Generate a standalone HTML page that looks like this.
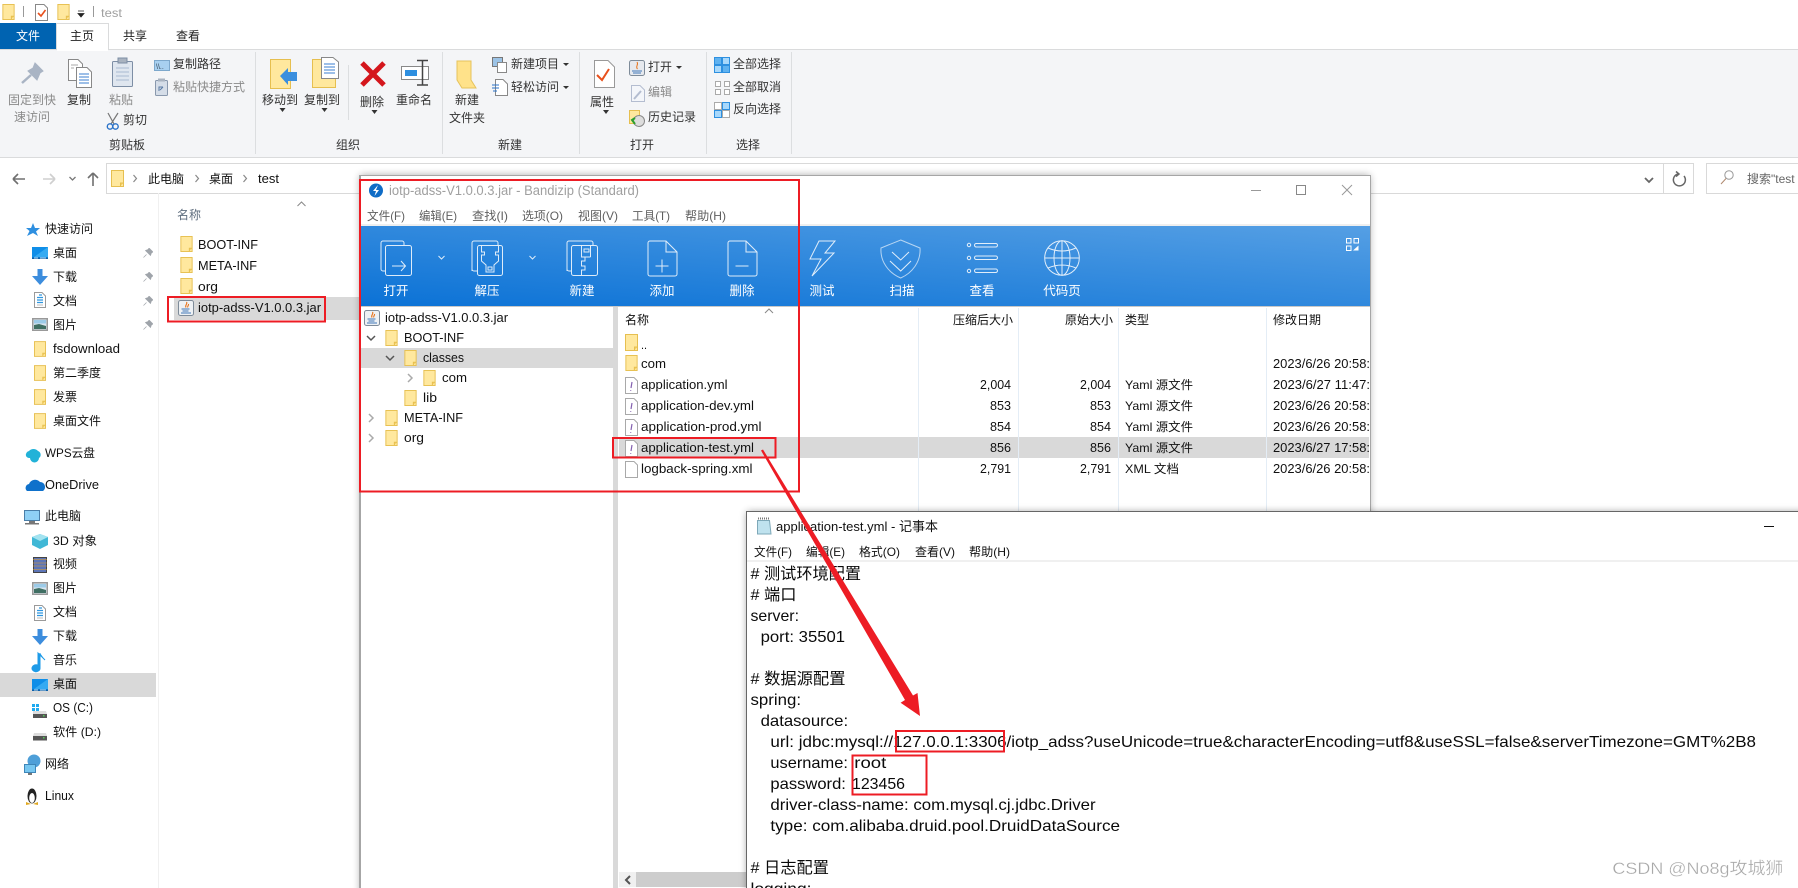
<!DOCTYPE html>
<html lang="zh-CN"><head><meta charset="utf-8"><title>test</title>
<style>
html,body{margin:0;padding:0;background:#fff;overflow:hidden;width:1798px;height:888px}
svg{display:block;font-family:"Liberation Sans","Noto Sans CJK SC",sans-serif;font-size:12px;fill:#111}
.g{fill:#8a8a8a}.d{fill:#333}.w{fill:#fff}.m{fill:#5f5f5f}
.l{font-size:12.6px}
.n{font-size:16px;fill:#0a0a0a}
.o{fill:none;stroke:#fff;stroke-width:1;opacity:.85}
</style></head><body>
<svg width="1798" height="888" viewBox="0 0 1798 888" xmlns="http://www.w3.org/2000/svg">
<defs>
<symbol id="f" viewBox="0 0 13 17"><rect x=".5" y=".5" width="12" height="16" fill="#ffe89e" stroke="#e6bf50"/><path d="M9.5 16V13H12.5" fill="#f5cf62" stroke="#e6bf50"/></symbol>
<symbol id="y" viewBox="0 0 13 17"><path d="M.5.5H9L12.5 4V16.5H.5Z" fill="#fff" stroke="#a9a9a9"/><path d="M7 5 6 11M5.7 13v.8" stroke="#8460b0" stroke-width="1.2" fill="none"/></symbol>
<symbol id="x" viewBox="0 0 13 17"><path d="M.5.5H9L12.5 4V16.5H.5Z" fill="#fff" stroke="#a9a9a9"/></symbol>
<symbol id="j" viewBox="0 0 16 16"><rect x=".5" y=".5" width="15" height="15" rx="2" fill="#eef1f4" stroke="#7e8b99"/><path d="M8.5 2C10 4 6.500 5 8 7.500M10.500 4C11 5.500 9 6 9.800 7.500" stroke="#e8741c" fill="none" stroke-width="1.100"/><path d="M3.500 9H11.500M4.500 11H10.500M3 13H13" stroke="#4078b8" stroke-width="1.100"/></symbol>
<symbol id="desk" viewBox="0 0 16 12"><rect width="16" height="12" fill="#0f8ee8"/><path d="M16 0V10H2Z" fill="#35aaf2"/><rect y="10.500" width="16" height="1.500" fill="#0b5fa8"/><path d="M2 11H6M8 11H14" stroke="#fff" stroke-width=".8"/></symbol>
<symbol id="down" viewBox="0 0 16 16"><path d="M5.500 0H10.500V7H16L8 16 0 7H5.500Z" fill="#3c8ddd"/></symbol>
<symbol id="doc" viewBox="0 0 12 16"><path d="M.5.500H8L11.500 4V15.500H.5Z" fill="#fff" stroke="#9a9a9a"/><path d="M5 3H8M3 5.500H9M3 8H9M3 10.500H9" stroke="#2f96e0" stroke-width="1.200"/><path d="M3 13H9" stroke="#bbb"/></symbol>
<symbol id="pic" viewBox="0 0 16 13"><rect x=".75" y=".75" width="14.500" height="11.500" fill="#dbe6ef" stroke="#999" stroke-width="1.500"/><path d="M2 7 7 6 14 8V11H2Z" fill="#3f6f63"/><rect x="2" y="2" width="12" height="3.500" fill="#9ccbe8"/></symbol>
<symbol id="pin" viewBox="0 0 10 10"><path d="M6 0 10 4 8.500 4.800 7.500 7.500 2.500 2.500 5.200 1.500ZM3.500 6.500 .5 9.500" fill="#9fa4aa" stroke="#9fa4aa" stroke-width=".7"/></symbol>
<linearGradient id="tb" x1="0" y1="1" x2="1" y2="0"><stop offset="0" stop-color="#0b72d6"/><stop offset="1" stop-color="#559fe4"/></linearGradient>
<filter id="sh" x="-3%" y="-3%" width="106%" height="106%"><feGaussianBlur stdDeviation="4"/></filter>
<clipPath id="cd"><rect x="1267" y="300" width="102" height="220"/></clipPath>
<clipPath id="cn"><rect x="747" y="563" width="1051" height="325"/></clipPath>
</defs>

<rect width="1798" height="888" fill="#fff"/>

<!-- Explorer title bar -->
<use href="#f" x="2" y="4" width="13" height="16"/>
<rect x="23" y="6" width="1" height="11" fill="#999"/>
<path d="M35.500 4.500H44L47.500 8V20.500H35.500Z" fill="#fff" stroke="#888"/>
<path d="M38 13 41 16 45.500 10" fill="none" stroke="#e8501c" stroke-width="1.600"/>
<use href="#f" x="57" y="4" width="13" height="16"/>
<path d="M78 11H84M78 13.500 81 17 84 13.500Z" fill="#222" stroke="#222" stroke-width=".8"/>
<rect x="93" y="6" width="1" height="11" fill="#999"/>
<text x="101" y="17" font-size="12" fill="#a0a0a0" textLength="21" lengthAdjust="spacingAndGlyphs">test</text>

<!-- Tabs -->
<rect x="0" y="23" width="56" height="27" fill="#0063b1"/>
<text x="16" y="40" class="w">文件</text>
<text x="123" y="40" fill="#222">共享</text>
<text x="176" y="40" fill="#222">查看</text>

<!-- Ribbon -->
<rect x="0" y="50" width="1798" height="107" fill="#f4f5f7"/>
<rect x="0" y="49" width="1798" height="1" fill="#dadbdc"/>
<rect x="0" y="157" width="1798" height="1" fill="#dadbdc"/>
<path d="M56.500 50V23.500H108.500V50" fill="#fff" stroke="#dadbdc"/>
<rect x="57" y="24" width="51" height="27" fill="#fff"/>
<text x="70" y="40" fill="#222">主页</text>
<g fill="#dcdee0">
<rect x="255" y="52" width="1" height="102"/><rect x="442" y="52" width="1" height="102"/><rect x="579" y="52" width="1" height="102"/><rect x="706" y="52" width="1" height="102"/><rect x="791" y="52" width="1" height="102"/>
<rect x="348" y="65" width="1" height="55"/>
</g>

<!-- ribbon: clipboard -->
<path d="M35 63 43 71 40 73 37 80 28 71 33 68Z" fill="#a9b4c4" stroke="#a9b4c4"/>
<path d="M31 75 22 83" stroke="#a9b4c4" stroke-width="2.500"/>
<text x="8" y="104" class="g">固定到快</text><text x="14" y="121" class="g">速访问</text>
<path d="M68.500 59.500H78L82.500 64V80.500H68.500Z" fill="#fff" stroke="#888"/>
<path d="M76.500 67.500H87L91.500 72V87.500H76.500Z" fill="#fff" stroke="#888"/>
<path d="M79 74H89M79 77H89M79 80H89M79 83H89" stroke="#3b7fd0"/>
<path d="M71 65H78M71 68H74" stroke="#aaa"/>
<text x="67" y="104" class="d">复制</text>
<rect x="112.500" y="61.500" width="20" height="25" rx="1" fill="#dfe6ef" stroke="#7d8ea5"/>
<rect x="118" y="58" width="9" height="5" fill="#a9b3c0" stroke="#7d8ea5"/>
<path d="M116 68H129M116 72H129M116 76H129M116 80H129" stroke="#a8bbd2"/>
<text x="109" y="104" class="g">粘贴</text>
<path d="M108 113 114 124M118 113 111 124" stroke="#777" fill="none" stroke-width="1.200"/>
<circle cx="110" cy="126.500" r="2.700" fill="none" stroke="#2a72c8" stroke-width="1.400"/><circle cx="115.500" cy="126.500" r="2.700" fill="none" stroke="#2a72c8" stroke-width="1.400"/>
<text x="123" y="124" class="d">剪切</text>
<rect x="154.500" y="60.500" width="15" height="10" fill="#a8d0f0" stroke="#7da8cc"/><text x="156" y="69" font-size="7" fill="#345">\\..</text>
<text x="173" y="68" class="d">复制路径</text>
<rect x="155.500" y="80.500" width="12" height="15" rx="1" fill="#d5dde8" stroke="#8998ad"/><rect x="158" y="78.500" width="7" height="3" fill="#a9b3c0"/><path d="M159 91V87H163M163 87 160 90" stroke="#5a7ba5" fill="none"/>
<text x="173" y="91" class="g">粘贴快捷方式</text>
<text x="109" y="149" class="d">剪贴板</text>

<!-- organize -->
<rect x="270.500" y="59.500" width="20" height="29" fill="#ffe89e" stroke="#e6bf50"/>
<path d="M280 76 288 68V72H297V81H288V85Z" fill="#3b8fde"/>
<text x="262" y="104" class="d">移动到</text>
<path d="M279.500 108H285.500L282.500 112Z" fill="#333"/>
<rect x="312.500" y="59.500" width="23" height="28" fill="#ffe89e" stroke="#e6bf50"/>
<path d="M321.500 57.500H333L338.500 62V78.500H321.500Z" fill="#fff" stroke="#888"/>
<path d="M324 64H335M324 67H335M324 70H335M324 73H335" stroke="#3b7fd0"/>
<text x="304" y="104" class="d">复制到</text>
<path d="M321.500 108H327.500L324.500 112Z" fill="#333"/>
<path d="M362 63 384 85M384 63 362 85" stroke="#d4161c" stroke-width="5"/>
<text x="360" y="106" class="d">删除</text>
<path d="M371.500 110H377.500L374.500 114Z" fill="#333"/>
<rect x="401.500" y="66.500" width="27" height="13" fill="#fff" stroke="#888"/>
<rect x="405" y="70" width="12" height="6" fill="#2e8fe0"/>
<path d="M417 60.500H428M422.500 60.500V85M417 85H428" stroke="#444" stroke-width="1.500" fill="none"/>
<text x="396" y="104" class="d">重命名</text>
<text x="336" y="149" class="d">组织</text>

<!-- new -->
<path d="M457 61H471V80L476 88H462L457 80Z" fill="#ffe28a" stroke="#e6c35c"/>
<text x="455" y="104" class="d">新建</text><text x="449" y="122" class="d">文件夹</text>
<rect x="492.500" y="57.500" width="10" height="9" fill="#9cc3e6" stroke="#777"/>
<rect x="497.500" y="62.500" width="9" height="10" fill="#fff" stroke="#888"/>
<text x="511" y="68" class="d">新建项目</text>
<path d="M563 63H569L566 66Z" fill="#333"/>
<path d="M495.500 79.500H503L507.500 84V95.500H495.500Z" fill="#fff" stroke="#888"/>
<path d="M492 85H499M492 88H499M493 91H497" stroke="#2a72c8"/>
<text x="511" y="91" class="d">轻松访问</text>
<path d="M563 86H569L566 89Z" fill="#333"/>
<text x="498" y="149" class="d">新建</text>

<!-- open -->
<path d="M594.500 60.500H608L614.500 67V87.500H594.500Z" fill="#fff" stroke="#999"/>
<path d="M597 75 602 80 609 69" fill="none" stroke="#e8501c" stroke-width="2"/>
<text x="590" y="106" class="d">属性</text>
<path d="M603 110H609L606 114Z" fill="#333"/>
<rect x="629.500" y="60.500" width="15" height="15" rx="2" fill="#e6e9ee" stroke="#7e8b99"/>
<path d="M637 62C639 65 635 66 637.500 69" stroke="#e8741c" fill="none"/><path d="M632 71H642M633 73H641" stroke="#4078b8"/>
<text x="648" y="71" class="d">打开</text>
<path d="M676 66H682L679 69Z" fill="#333"/>
<path d="M631.500 85.500H640L644.500 90V101.500H631.500Z" fill="#f4f6fa" stroke="#b4bdd0"/><path d="M634 99 641 91" stroke="#b4bdd0" stroke-width="2"/>
<text x="648" y="96" class="g">编辑</text>
<rect x="629.500" y="110.500" width="10" height="13" fill="#ffe89e" stroke="#e6bf50"/>
<circle cx="639" cy="121" r="5.500" fill="#ddd" stroke="#888"/><path d="M635 118 632 120 635 124" stroke="#2ea02e" stroke-width="2" fill="none"/>
<text x="648" y="121" class="d">历史记录</text>
<text x="630" y="149" class="d">打开</text>

<!-- select -->
<g fill="#a8d8fb" stroke="#2e90e0">
<rect x="714.500" y="57.500" width="7" height="7" fill="#5fb2f0"/><rect x="722.500" y="57.500" width="7" height="7"/><rect x="714.500" y="65.500" width="7" height="7"/><rect x="722.500" y="65.500" width="7" height="7" fill="#5fb2f0"/>
</g>
<g fill="#fff" stroke="#aaa"><rect x="715.500" y="81.500" width="5" height="5"/><rect x="724.500" y="81.500" width="5" height="5"/><rect x="715.500" y="89.500" width="5" height="5"/><rect x="724.500" y="89.500" width="5" height="5"/></g>
<g stroke="#2e90e0"><rect x="714.500" y="102.500" width="7" height="7" fill="#fff" stroke="#aaa"/><rect x="722.500" y="102.500" width="7" height="7" fill="#a8d8fb"/><rect x="714.500" y="110.500" width="7" height="7" fill="#a8d8fb"/><rect x="722.500" y="110.500" width="7" height="7" fill="#fff" stroke="#aaa"/></g>
<text x="733" y="68" class="d">全部选择</text>
<text x="733" y="91" class="d">全部取消</text>
<text x="733" y="113" class="d">反向选择</text>
<text x="736" y="149" class="d">选择</text>

<!-- Address bar -->
<path d="M13 179H25M13 179 18 174M13 179 18 184" stroke="#707070" stroke-width="1.600" fill="none"/>
<path d="M43 179H55M55 179 50 174M55 179 50 184" stroke="#cfcfcf" stroke-width="1.600" fill="none"/>
<path d="M69.500 177 72.500 180 75.500 177" stroke="#777" stroke-width="1.300" fill="none"/>
<path d="M93 186V173M93 173 88 178M93 173 98 178" stroke="#707070" stroke-width="1.600" fill="none"/>
<rect x="106.500" y="163.500" width="1587" height="30" fill="#fff" stroke="#d9d9d9"/>
<rect x="1706.500" y="163.500" width="100" height="30" fill="#fff" stroke="#d9d9d9"/>
<rect x="1663" y="164" width="1" height="29" fill="#d9d9d9"/>
<use href="#f" x="111" y="170" width="13" height="17"/>
<path d="M133.500 175 136.500 178.500 133.500 182" stroke="#888" fill="none" stroke-width="1.200"/>
<text x="148" y="183" fill="#111">此电脑</text>
<path d="M195.500 175 198.500 178.500 195.500 182" stroke="#888" fill="none" stroke-width="1.200"/>
<text x="209" y="183" fill="#111">桌面</text>
<path d="M243.500 175 246.500 178.500 243.500 182" stroke="#888" fill="none" stroke-width="1.200"/>
<text x="258" y="183" fill="#111" textLength="21" lengthAdjust="spacingAndGlyphs" class="l">test</text>
<path d="M1645 178 1649 182 1653 178" stroke="#666" stroke-width="1.800" fill="none"/>
<path d="M1684 176A6 6 0 1 1 1678 174M1676 171.500 1679 174 1676 176.500" stroke="#666" stroke-width="1.500" fill="none"/>
<circle cx="1729" cy="175" r="4.200" fill="none" stroke="#999"/><path d="M1726 178.500 1721 184" stroke="#b08a70"/>
<text x="1747" y="183" fill="#666">搜索"test</text>

<!-- Sidebar -->
<path d="M33 223 35 228H40L36 231.500 38 236 33 233 27 236 29.500 231 26 228 31 228Z" fill="#2e8fe0"/>
<text x="45" y="233">快速访问</text>
<use href="#desk" x="32" y="247" width="16" height="12"/><text x="53" y="257">桌面</text>
<use href="#down" x="32" y="269" width="16" height="16"/><text x="53" y="281">下载</text>
<use href="#doc" x="34" y="292" width="12" height="16"/><text x="53" y="305">文档</text>
<use href="#pic" x="32" y="318" width="16" height="13"/><text x="53" y="329">图片</text>
<use href="#pin" x="143" y="248" width="10" height="10"/><use href="#pin" x="143" y="272" width="10" height="10"/><use href="#pin" x="143" y="296" width="10" height="10"/><use href="#pin" x="143" y="320" width="10" height="10"/>
<use href="#f" x="34" y="341" width="12" height="16"/><text x="53" y="353" class="l" textLength="67" lengthAdjust="spacingAndGlyphs">fsdownload</text>
<use href="#f" x="34" y="365" width="12" height="16"/><text x="53" y="377">第二季度</text>
<use href="#f" x="34" y="389" width="12" height="16"/><text x="53" y="401">发票</text>
<use href="#f" x="34" y="413" width="12" height="16"/><text x="53" y="425">桌面文件</text>
<path d="M26 456a4 4 0 0 1 3-5 6 6 0 0 1 9 0 4 4 0 0 1 1 7 4 4 0 0 1-9 0 4 4 0 0 1-4-2Z" fill="#22b2d8"/>
<text x="45" y="457" textLength="50" lengthAdjust="spacingAndGlyphs">WPS云盘</text>
<path d="M27 491a4 4 0 0 1 2-7 6.500 6.500 0 0 1 11-2 5 5 0 0 1 3 9Z" fill="#0f71cb"/>
<text x="45" y="489" class="l" textLength="54" lengthAdjust="spacingAndGlyphs">OneDrive</text>
<rect x="24.500" y="510.500" width="15" height="10" fill="#8fd0f5" stroke="#4a7ea8"/><rect x="29" y="521" width="6" height="2" fill="#777"/><rect x="25" y="523" width="14" height="1.500" fill="#777"/>
<text x="45" y="520">此电脑</text>
<path d="M40 534 48 537V545L40 549 32 545V537Z" fill="#41b8d6"/><path d="M40 534 48 537 40 541 32 537Z" fill="#a3e3f0"/><text x="53" y="545" textLength="44" lengthAdjust="spacingAndGlyphs">3D 对象</text>
<rect x="33.500" y="557.500" width="13" height="15" fill="#5d76b8" stroke="#444"/><path d="M33 559.500H47M33 563H47M33 566H47M33 569.500H47" stroke="#e0a030" stroke-width=".8" opacity=".7"/>
<text x="53" y="568">视频</text>
<use href="#pic" x="32" y="582" width="16" height="13"/><text x="53" y="592">图片</text>
<use href="#doc" x="34" y="605" width="12" height="16"/><text x="53" y="616">文档</text>
<use href="#down" x="32" y="629" width="16" height="16"/><text x="53" y="640">下载</text>
<path d="M40 653V668a4 3.500 0 1 1-2-2.800V653L45 660" fill="#1e9be8" stroke="#1e9be8" stroke-width="1"/><text x="53" y="664">音乐</text>
<rect x="0" y="673" width="156" height="24" fill="#d9d9d9"/>
<use href="#desk" x="32" y="679" width="16" height="12"/><text x="53" y="688">桌面</text>
<rect x="32" y="704" width="3" height="3" fill="#1eaaf0"/><rect x="36" y="704" width="3" height="3" fill="#1eaaf0"/><rect x="32" y="708" width="3" height="3" fill="#1eaaf0"/><rect x="36" y="708" width="3" height="3" fill="#1eaaf0"/>
<path d="M33 711H46L47 714H33Z" fill="#ddd"/><rect x="33" y="714" width="14" height="4" fill="#555"/><rect x="43" y="715" width="1.500" height="1.500" fill="#5c5"/>
<text x="53" y="712" class="l" textLength="40" lengthAdjust="spacingAndGlyphs">OS (C:)</text>
<path d="M34 733H46L47 736H33Z" fill="#ddd"/><rect x="33" y="736" width="14" height="4.500" fill="#555"/><rect x="43" y="737" width="1.500" height="1.500" fill="#5c5"/>
<text x="53" y="736" textLength="48" lengthAdjust="spacingAndGlyphs">软件 (D:)</text>
<circle cx="34" cy="761" r="6.500" fill="#4e9fd8"/><rect x="24.500" y="764.500" width="11" height="8" fill="#76c6f0" stroke="#3e86b8"/><rect x="28" y="773" width="4" height="2" fill="#777"/>
<text x="45" y="768">网络</text>
<ellipse cx="32" cy="796" rx="4.500" ry="7.500" fill="#222"/><ellipse cx="32" cy="798" rx="2.800" ry="5" fill="#fff"/><path d="M26 802 31 804 26 805ZM38 802 33 804 38 805Z" fill="#e0a820"/>
<text x="45" y="800" class="l" textLength="29" lengthAdjust="spacingAndGlyphs">Linux</text>
<rect x="158" y="193" width="1" height="695" fill="#f0f0f0"/>

<!-- Explorer list -->
<path d="M297.500 206 301.500 202 305.500 206" stroke="#888" fill="none"/>
<text x="177" y="219" fill="#5e6d7e">名称</text>
<use href="#f" x="180" y="236" width="13" height="16"/><text x="198" y="249" class="l" textLength="60" lengthAdjust="spacingAndGlyphs">BOOT-INF</text>
<use href="#f" x="180" y="257" width="13" height="16"/><text x="198" y="270" class="l" textLength="59" lengthAdjust="spacingAndGlyphs">META-INF</text>
<use href="#f" x="180" y="278" width="13" height="16"/><text x="198" y="291" class="l" textLength="20" lengthAdjust="spacingAndGlyphs">org</text>
<rect x="174" y="297" width="186" height="23" fill="#d9d9d9"/>
<use href="#j" x="178" y="300" width="16" height="16"/><text x="198" y="312" class="l" textLength="123" lengthAdjust="spacingAndGlyphs">iotp-adss-V1.0.0.3.jar</text>

<!-- Bandizip window -->
<rect x="360" y="175" width="1010" height="720" fill="#000" opacity=".32" filter="url(#sh)"/>
<rect x="359" y="175" width="1012" height="713" fill="#a6a6a6"/>
<rect x="361" y="176" width="1009" height="712" fill="#fff"/>
<circle cx="376" cy="190.500" r="7" fill="#0f6cc6"/><path d="M378 185 373 191H376L374.500 196 379 190H376Z" fill="#fff"/>
<text x="389" y="195" font-size="13.400" fill="#a0a0a0" textLength="250" lengthAdjust="spacingAndGlyphs">iotp-adss-V1.0.0.3.jar - Bandizip (Standard)</text>
<rect x="1251" y="190" width="10" height="1" fill="#999"/>
<rect x="1296.500" y="185.500" width="9" height="9" fill="none" stroke="#888"/>
<path d="M1342 185 1352 195M1352 185 1342 195" stroke="#999" fill="none"/>
<g class="m">
<text x="367" y="220" textLength="38" lengthAdjust="spacingAndGlyphs">文件(F)</text><text x="419" y="220" textLength="38" lengthAdjust="spacingAndGlyphs">编辑(E)</text><text x="472" y="220" textLength="36" lengthAdjust="spacingAndGlyphs">查找(I)</text><text x="522" y="220" textLength="41" lengthAdjust="spacingAndGlyphs">选项(O)</text><text x="578" y="220" textLength="40" lengthAdjust="spacingAndGlyphs">视图(V)</text><text x="632" y="220" textLength="38" lengthAdjust="spacingAndGlyphs">工具(T)</text><text x="685" y="220" textLength="41" lengthAdjust="spacingAndGlyphs">帮助(H)</text>
</g>
<rect x="361" y="224" width="1009" height="2" fill="#efefef"/>
<rect x="361" y="226" width="1009" height="80" fill="url(#tb)"/>
<!-- toolbar icons -->
<g class="o">
<path d="M385 271H383a2 2 0 0 1-2-2V243a2 2 0 0 1 2-2H402a2 2 0 0 1 2 2V245.500"/>
<rect x="385.500" y="245.500" width="26" height="30" rx="2"/>
<path d="M392 266H405M401 261 405.500 266 401 271"/>
<path d="M472 271V243a2 2 0 0 1 2-2H496a2 2 0 0 1 2 2V245.500M477 271H474a2 2 0 0 1-2-2"/>
<rect x="477.500" y="245.500" width="25" height="30" rx="2"/>
<path d="M481.500 245.500V252H484.500V255H481.500V261L486 265V272H494V265L498.500 261V255H495.500V252H498.500V245.500"/>
<rect x="488" y="267" width="4" height="3"/>
<path d="M567 271V243a2 2 0 0 1 2-2H591a2 2 0 0 1 2 2V245.500M571 271H569a2 2 0 0 1-2-2"/>
<rect x="571.500" y="245.500" width="26" height="30" rx="2"/>
<path d="M581.500 245.500V257H585V261H581.500V266H585V270H581.500V275.500M590.500 245.500V257"/>
<path d="M581.500 257H590.500"/>
<rect x="584" y="249" width="5" height="3"/>
<path d="M650 241H666L677 252V274a2 2 0 0 1-2 2H650a2 2 0 0 1-2-2V243a2 2 0 0 1 2-2ZM666 241V252H677"/>
<path d="M655.500 266H668.500M662 259.500V272.500"/>
<path d="M730 241H746L757 252V274a2 2 0 0 1-2 2H730a2 2 0 0 1-2-2V243a2 2 0 0 1 2-2ZM746 241V252H757"/>
<path d="M735.500 266H748.500"/>
<path d="M835 241H819L810 259H821L812 276 834 253H825Z"/>
<path d="M900.700 240 920 248C921 262 912 273 900.700 278 889 273 880 262 881 248Z" opacity=".75"/>
<path d="M892 252 900.700 260 909 252M890 261 900.700 271 911 261"/>
<circle cx="969" cy="245" r="1.700"/><circle cx="969" cy="258" r="1.700"/><circle cx="969" cy="271" r="1.700"/>
<rect x="974.500" y="243.500" width="23" height="3.500" rx="1.700"/><rect x="974.500" y="256" width="23" height="3.500" rx="1.700"/><rect x="974.500" y="269" width="23" height="3.500" rx="1.700"/>
<circle cx="1062" cy="258" r="17.300"/><ellipse cx="1062" cy="258" rx="8" ry="17.300"/>
<path d="M1062 241V275M1045 258H1079M1048 248Q1062 254 1076 248M1048 268Q1062 262 1076 268"/>
<path d="M438.500 256 441.500 259 444.500 256M529.500 256 532.500 259 535.500 256"/>
</g>
<g class="w" text-anchor="middle" font-size="12.500">
<text x="396" y="295">打开</text><text x="487" y="295">解压</text><text x="582" y="295">新建</text><text x="662" y="295">添加</text><text x="742" y="295">删除</text><text x="822" y="295">测试</text><text x="902" y="295">扫描</text><text x="982" y="295">查看</text><text x="1062" y="295">代码页</text>
</g>
<g fill="none" stroke="#fff"><rect x="1346.500" y="238.500" width="4.500" height="4.500"/><rect x="1354" y="238.500" width="4.500" height="4.500"/><rect x="1346.500" y="246" width="4.500" height="4.500"/></g>
<path d="M1353 250.500 1358.500 250.500 1358.500 245.500Z" fill="#fff"/>

<!-- Bandizip panes -->
<rect x="613" y="306" width="5" height="582" fill="#d9d9d9"/>
<rect x="361" y="306" width="1009" height="1" fill="#c8c8c8"/>
<use href="#j" x="364" y="310" width="16" height="16"/><text x="385" y="322" class="l" textLength="123" lengthAdjust="spacingAndGlyphs">iotp-adss-V1.0.0.3.jar</text>
<path d="M367 336 371 340 375 336" stroke="#555" stroke-width="1.500" fill="none"/>
<use href="#f" x="385" y="330" width="13" height="16"/><text x="404" y="342" class="l" textLength="60" lengthAdjust="spacingAndGlyphs">BOOT-INF</text>
<rect x="361" y="348" width="252" height="20" fill="#d9d9d9"/>
<path d="M386 356 390 360 394 356" stroke="#555" stroke-width="1.500" fill="none"/>
<use href="#f" x="404" y="350" width="13" height="16"/><text x="423" y="362" class="l" textLength="41" lengthAdjust="spacingAndGlyphs">classes</text>
<path d="M408 374 412 378 408 382" stroke="#aaa" stroke-width="1.500" fill="none"/>
<use href="#f" x="423" y="370" width="13" height="16"/><text x="442" y="382" class="l" textLength="25" lengthAdjust="spacingAndGlyphs">com</text>
<use href="#f" x="404" y="390" width="13" height="16"/><text x="423" y="402" class="l" textLength="14" lengthAdjust="spacingAndGlyphs">lib</text>
<path d="M369 414 373 418 369 422" stroke="#aaa" stroke-width="1.500" fill="none"/>
<use href="#f" x="385" y="410" width="13" height="16"/><text x="404" y="422" class="l" textLength="59" lengthAdjust="spacingAndGlyphs">META-INF</text>
<path d="M369 434 373 438 369 442" stroke="#aaa" stroke-width="1.500" fill="none"/>
<use href="#f" x="385" y="430" width="13" height="16"/><text x="404" y="442" class="l" textLength="20" lengthAdjust="spacingAndGlyphs">org</text>

<!-- File list -->
<rect x="619" y="437" width="750" height="21" fill="#d9d9d9"/>
<g fill="#e4edf6"><rect x="918" y="308" width="1" height="204"/><rect x="1018" y="308" width="1" height="204"/><rect x="1118" y="308" width="1" height="204"/><rect x="1266" y="308" width="1" height="204"/></g>
<path d="M765 313 769 309 773 313" stroke="#888" fill="none"/>
<text x="625" y="324" font-size="12">名称</text>
<text x="953" y="324">压缩后大小</text>
<text x="1065" y="324">原始大小</text>
<text x="1125" y="324">类型</text>
<text x="1273" y="324">修改日期</text>
<use href="#f" x="625" y="334" width="13" height="17"/><text x="641" y="349" textLength="6" lengthAdjust="spacingAndGlyphs">..</text>
<use href="#f" x="625" y="355" width="13" height="16"/><text x="641" y="368" class="l" textLength="25" lengthAdjust="spacingAndGlyphs">com</text>
<use href="#y" x="625" y="377" width="13" height="17"/><text x="641" y="389" class="l" textLength="86.500" lengthAdjust="spacingAndGlyphs">application.yml</text>
<use href="#y" x="625" y="398" width="13" height="17"/><text x="641" y="410" class="l" textLength="113" lengthAdjust="spacingAndGlyphs">application-dev.yml</text>
<use href="#y" x="625" y="419" width="13" height="17"/><text x="641" y="431" class="l" textLength="120.500" lengthAdjust="spacingAndGlyphs">application-prod.yml</text>
<use href="#y" x="625" y="440" width="13" height="17"/><text x="641" y="452" class="l" textLength="113" lengthAdjust="spacingAndGlyphs">application-test.yml</text>
<use href="#x" x="625" y="461" width="13" height="17"/><text x="641" y="473" class="l" textLength="111.500" lengthAdjust="spacingAndGlyphs">logback-spring.xml</text>
<g class="l">
<text x="980" y="389" textLength="31" lengthAdjust="spacingAndGlyphs">2,004</text><text x="1080" y="389" textLength="31" lengthAdjust="spacingAndGlyphs">2,004</text>
<text x="990" y="410" textLength="21" lengthAdjust="spacingAndGlyphs">853</text><text x="1090" y="410" textLength="21" lengthAdjust="spacingAndGlyphs">853</text>
<text x="990" y="431" textLength="21" lengthAdjust="spacingAndGlyphs">854</text><text x="1090" y="431" textLength="21" lengthAdjust="spacingAndGlyphs">854</text>
<text x="990" y="452" textLength="21" lengthAdjust="spacingAndGlyphs">856</text><text x="1090" y="452" textLength="21" lengthAdjust="spacingAndGlyphs">856</text>
<text x="980" y="473" textLength="31" lengthAdjust="spacingAndGlyphs">2,791</text><text x="1080" y="473" textLength="31" lengthAdjust="spacingAndGlyphs">2,791</text>
</g>
<g font-size="12">
<text x="1125" y="389" textLength="68" lengthAdjust="spacingAndGlyphs">Yaml 源文件</text><text x="1125" y="410" textLength="68" lengthAdjust="spacingAndGlyphs">Yaml 源文件</text><text x="1125" y="431" textLength="68" lengthAdjust="spacingAndGlyphs">Yaml 源文件</text><text x="1125" y="452" textLength="68" lengthAdjust="spacingAndGlyphs">Yaml 源文件</text><text x="1125" y="473" textLength="54" lengthAdjust="spacingAndGlyphs">XML 文档</text>
</g>
<g clip-path="url(#cd)" class="l">
<text x="1273" y="368" textLength="97" lengthAdjust="spacingAndGlyphs">2023/6/26 20:58:</text>
<text x="1273" y="389" textLength="97" lengthAdjust="spacingAndGlyphs">2023/6/27 11:47:</text>
<text x="1273" y="410" textLength="97" lengthAdjust="spacingAndGlyphs">2023/6/26 20:58:</text>
<text x="1273" y="431" textLength="97" lengthAdjust="spacingAndGlyphs">2023/6/26 20:58:</text>
<text x="1273" y="452" textLength="97" lengthAdjust="spacingAndGlyphs">2023/6/27 17:58:</text>
<text x="1273" y="473" textLength="97" lengthAdjust="spacingAndGlyphs">2023/6/26 20:58:</text>
</g>
<rect x="619" y="872" width="17" height="15" fill="#f0f0f0"/>
<path d="M630 876 626 880 630 884" stroke="#555" stroke-width="2" fill="none"/>
<rect x="636" y="872" width="115" height="15" fill="#cdcdcd"/>

<!-- Notepad -->
<rect x="747" y="512" width="1060" height="400" fill="#000" opacity=".4" filter="url(#sh)"/>
<rect x="746" y="511" width="1052" height="377" fill="#666"/>
<rect x="747" y="512" width="1051" height="376" fill="#fff"/>
<path d="M757.500 520.500H769.500L771 534H757.500Z" fill="#bfe2ee" stroke="#7ea8b8"/>
<path d="M758 518.500H770" stroke="#777" stroke-width="2" stroke-dasharray="1 1"/>
<text x="776" y="531" font-size="13" textLength="162" lengthAdjust="spacingAndGlyphs">application-test.yml - 记事本</text>
<rect x="1764" y="526" width="10" height="1" fill="#111"/>
<text x="754" y="556" textLength="38" lengthAdjust="spacingAndGlyphs">文件(F)</text><text x="806" y="556" textLength="39" lengthAdjust="spacingAndGlyphs">编辑(E)</text><text x="859" y="556" textLength="41" lengthAdjust="spacingAndGlyphs">格式(O)</text><text x="915" y="556" textLength="40" lengthAdjust="spacingAndGlyphs">查看(V)</text><text x="969" y="556" textLength="41" lengthAdjust="spacingAndGlyphs">帮助(H)</text>
<rect x="747" y="560" width="1051" height="2" fill="#f0f0f0"/>
<g clip-path="url(#cn)" class="n">
<text x="750.500" y="579" textLength="110.500" lengthAdjust="spacingAndGlyphs"># 测试环境配置</text>
<text x="750.500" y="600" textLength="46" lengthAdjust="spacingAndGlyphs"># 端口</text>
<text x="750.500" y="621" textLength="48.500" lengthAdjust="spacingAndGlyphs">server:</text>
<text x="760.600" y="642" textLength="84.500" lengthAdjust="spacingAndGlyphs">port: 35501</text>
<text x="750.500" y="684" textLength="95" lengthAdjust="spacingAndGlyphs"># 数据源配置</text>
<text x="750.500" y="705" textLength="50.500" lengthAdjust="spacingAndGlyphs">spring:</text>
<text x="760.600" y="726" textLength="87.500" lengthAdjust="spacingAndGlyphs">datasource:</text>
<text x="770.400" y="747" textLength="985.600" lengthAdjust="spacingAndGlyphs">url: jdbc:mysql://127.0.0.1:3306/iotp_adss?useUnicode=true&amp;characterEncoding=utf8&amp;useSSL=false&amp;serverTimezone=GMT%2B8</text>
<text x="770.400" y="768" textLength="77.500" lengthAdjust="spacingAndGlyphs">username:</text><text x="854.300" y="768" textLength="32" lengthAdjust="spacingAndGlyphs">root</text>
<text x="770.400" y="789" textLength="75.500" lengthAdjust="spacingAndGlyphs">password:</text><text x="852" y="789" textLength="53" lengthAdjust="spacingAndGlyphs">123456</text>
<text x="770.400" y="810" textLength="325.200" lengthAdjust="spacingAndGlyphs">driver-class-name: com.mysql.cj.jdbc.Driver</text>
<text x="770.400" y="831" textLength="349.600" lengthAdjust="spacingAndGlyphs">type: com.alibaba.druid.pool.DruidDataSource</text>
<text x="750.500" y="873" textLength="78.500" lengthAdjust="spacingAndGlyphs"># 日志配置</text>
<text x="750.500" y="894" textLength="61" lengthAdjust="spacingAndGlyphs">logging:</text>
</g>

<!-- Annotations -->
<g fill="none" stroke="#ed1c24" stroke-width="2">
<rect x="168" y="297" width="157" height="24.500"/>
<rect x="360" y="180" width="439" height="311.500"/>
<rect x="613" y="438" width="162.500" height="19.500"/>
<rect x="896" y="731" width="108" height="20.500"/>
<rect x="852.500" y="755.500" width="74" height="39"/>
</g>
<polygon points="761,450.500 763,449.500 913,695.500 917.500,693 920,716 900.600,702.700 905,700" fill="#ed1c24"/>

<text x="1612.400" y="874" font-size="17" fill="#a8a8a8" stroke="#fff" stroke-width=".3" textLength="171" lengthAdjust="spacingAndGlyphs">CSDN @No8g攻城狮</text>
</svg>
</body></html>
